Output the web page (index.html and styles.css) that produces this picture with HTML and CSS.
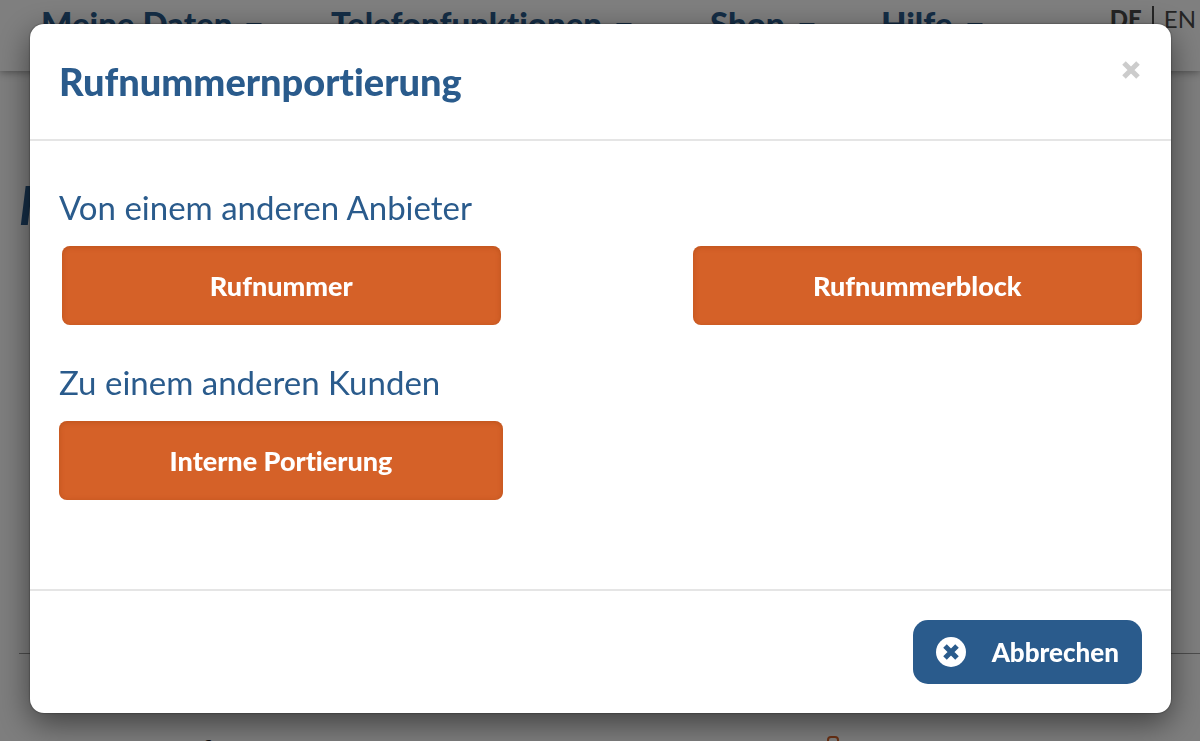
FILE: index.html
```html
<!DOCTYPE html>
<html lang="de">
<head>
  <meta charset="UTF-8">
  <meta name="viewport" content="width=device-width, initial-scale=1.0">
  <title>Rufnummernportierung</title>
  <link rel="stylesheet" href="styles.css">
</head>
<body>
  <header class="site-header">
    <nav class="main-nav">
      <a href="#" class="nav-daten">Meine Daten<span class="caret"></span></a>
      <a href="#" class="nav-telefon">Telefonfunktionen<span class="caret"></span></a>
      <a href="#" class="nav-shop">Shop<span class="caret"></span></a>
      <a href="#">Hilfe<span class="caret"></span></a>
    </nav>
    <div class="language">
      <a href="#" class="active">DE</a><span class="divider"></span><a href="#">EN</a>
    </div>
  </header>

  <main class="page">
    <h1>M</h1>
    <hr>
    <div class="page-row">
      <span>f</span>
      <svg class="lock-icon" viewBox="0 0 14 20">
        <path d="M2 9V4q0-3 3-3h4q3 0 3 3v5M1 9h12v10H1z"/>
      </svg>
    </div>
  </main>

  <div class="overlay">
    <div class="modal" role="dialog" aria-modal="true" aria-labelledby="modalTitle">
      <div class="modal-header">
        <h2 id="modalTitle">Rufnummernportierung</h2>
        <button type="button" class="close" aria-label="Schließen">
          <svg viewBox="0 0 18 18">
            <path d="M2 2l14 14M16 2L2 16"/>
          </svg>
        </button>
      </div>

      <div class="modal-body">
        <h3>Von einem anderen Anbieter</h3>
        <div class="button-row">
          <button type="button" class="btn btn-inset">Rufnummer</button>
          <button type="button" class="btn btn-wide">Rufnummerblock</button>
        </div>
        <h3>Zu einem anderen Kunden</h3>
        <div class="button-row">
          <button type="button" class="btn">Interne Portierung</button>
        </div>
      </div>

      <div class="modal-footer">
        <button type="button" class="btn-cancel">
          <svg viewBox="0 0 30 30">
            <circle cx="15" cy="15" r="15"/>
            <path d="M9 9l12 12M21 9L9 21"/>
          </svg>
          Abbrechen
        </button>
      </div>
    </div>
  </div>
</body>
</html>
```
FILE: styles.css
```css
* {
  margin: 0;
  padding: 0;
  box-sizing: border-box;
}

body {
  font-family: Lato, 'Open Sans', sans-serif;
  font-variant-ligatures: none;
  background-color: #fcfcfc;
  color: #2a5b8c;
  height: 100vh;
  overflow: hidden;
}

a {
  color: inherit;
  text-decoration: none;
}

button {
  font-family: inherit;
  font-variant-ligatures: inherit;
  border: none;
  cursor: pointer;
}

.site-header {
  position: relative;
  display: flex;
  justify-content: space-between;
  height: 71px;
  padding: 3px 4px 0 41px;
  background-color: #fff;
  box-shadow: 0 1px 8px rgba(0, 0, 0, 0.4);
}

.main-nav {
  display: flex;
  font-size: 33px;
  font-weight: 900;
  line-height: 40px;
  white-space: nowrap;
}

.nav-daten {
  width: 290px;
}

.nav-telefon {
  width: 379px;
}

.nav-shop {
  width: 171px;
}

.caret {
  display: inline-block;
  margin-left: 14px;
  vertical-align: 5px;
  border-top: 8px solid;
  border-left: 8px solid transparent;
  border-right: 8px solid transparent;
}

.language {
  display: flex;
  gap: 10px;
  color: #4a4a4a;
  font-size: 24px;
  line-height: 32px;
}

.language .active {
  font-weight: 900;
}

.divider {
  width: 2px;
  height: 22px;
  margin-top: 3px;
  background-color: #4a4a4a;
}

.page {
  padding: 100px 0 0 19px;
}

.page h1 {
  font-size: 54px;
  font-style: italic;
  font-weight: 900;
  line-height: 68px;
}

.page hr {
  margin-top: 414px;
  border: none;
  border-top: 1px solid #999;
}

.page-row {
  display: flex;
  justify-content: space-between;
  align-items: flex-start;
  padding: 80px 360px 0 182px;
  color: #222;
  font-size: 28px;
  font-weight: 700;
  line-height: 32px;
}

.lock-icon {
  width: 14px;
  height: 20px;
  margin-top: 2px;
  fill: none;
  stroke: #d56128;
  stroke-width: 2;
}

.overlay {
  position: fixed;
  inset: 0;
  padding: 24px 29px 28px 30px;
  background-color: rgba(0, 0, 0, 0.5);
}

.modal {
  background-color: #fff;
  border-radius: 14px;
  box-shadow: 0 0 2px rgba(0, 0, 0, 0.6), 0 10px 32px rgba(0, 0, 0, 0.5);
}

.modal-header {
  display: flex;
  justify-content: space-between;
  align-items: flex-start;
  padding: 33px 31px 34px 29px;
  border-bottom: 2px solid #e5e5e5;
}

.modal-header h2 {
  font-size: 38px;
  font-weight: 900;
  line-height: 48px;
}

.close {
  margin-top: 4px;
  background: none;
}

.close svg {
  display: block;
  width: 18px;
  height: 18px;
  stroke: #ccc;
  stroke-width: 5;
}

.modal-body {
  padding: 44px 29px 89px;
}

.modal-body h3 {
  margin-bottom: 17px;
  font-size: 33px;
  font-weight: 400;
  line-height: 44px;
}

.button-row {
  display: flex;
  justify-content: space-between;
}

.button-row + h3 {
  margin-top: 35px;
}

.btn {
  width: 41%;
  height: 79px;
  background-color: #d56128;
  border-radius: 8px;
  box-shadow: inset 0 1px 5px rgba(150, 60, 10, 0.4);
  color: #fff;
  font-size: 27px;
  font-weight: 900;
}

.btn-inset {
  width: 40.5%;
  margin-left: 3px;
}

.btn-wide {
  width: 41.5%;
}

.modal-footer {
  display: flex;
  justify-content: flex-end;
  padding: 29px;
  border-top: 2px solid #e5e5e5;
}

.btn-cancel {
  display: flex;
  align-items: center;
  gap: 26px;
  height: 64px;
  padding: 0 23px;
  background-color: #2a5b8c;
  border-radius: 15px;
  color: #fff;
  font-size: 26px;
  font-weight: 900;
}

.btn-cancel svg {
  width: 30px;
  height: 30px;
  fill: #fff;
}

.btn-cancel path {
  stroke: #2a5b8c;
  stroke-width: 5;
}
```
